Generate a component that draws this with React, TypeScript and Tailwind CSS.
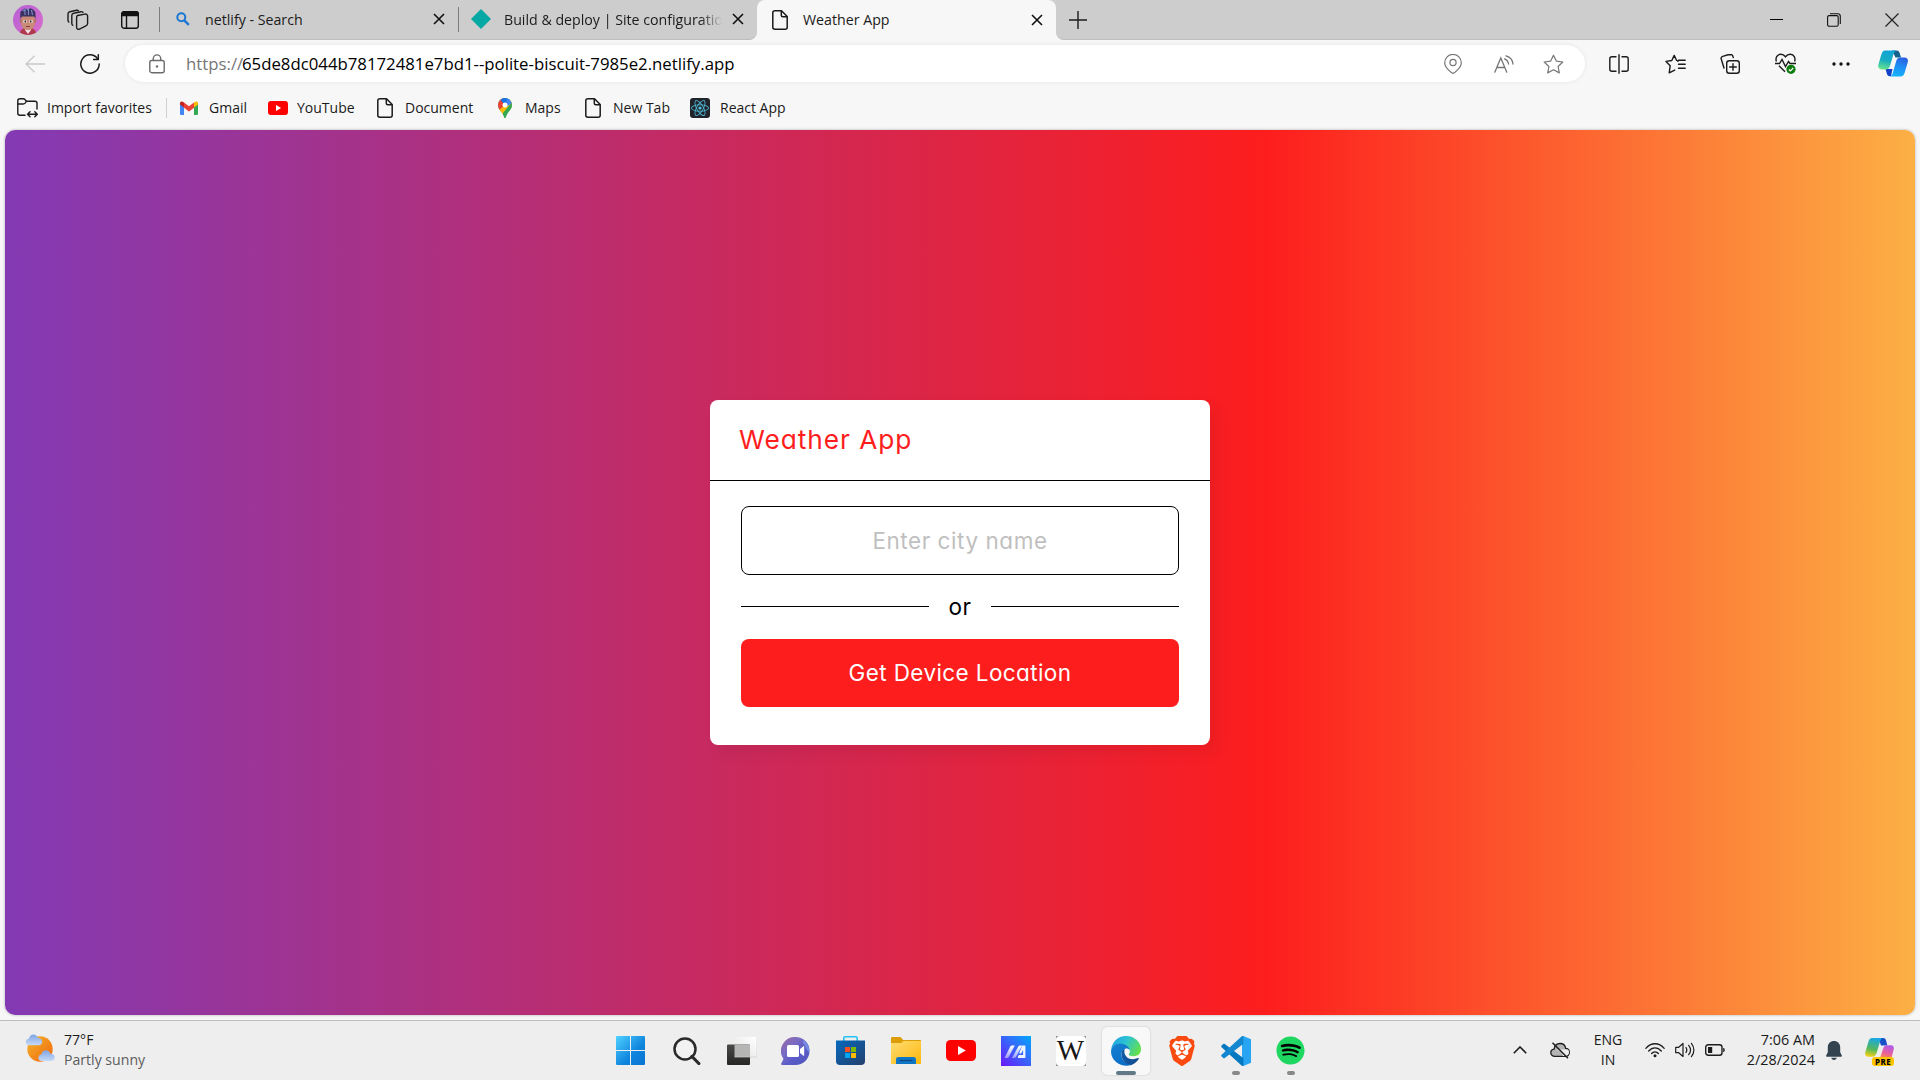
import React from "react";
import { FaReact, FaSpotify } from "react-icons/fa";
import { SiBrave } from "react-icons/si";

type IconProps = { className?: string };

/* ---------- title bar icons ---------- */

const Avatar = () => (
  <svg viewBox="0 0 30 30" className="size-[30px]">
    <defs>
      <clipPath id="av"><circle cx="15" cy="15" r="15" /></clipPath>
      <linearGradient id="avbg" x1="0" y1="0" x2="1" y2="1">
        <stop offset="0" stopColor="#b45fd6" />
        <stop offset="1" stopColor="#dc6ec8" />
      </linearGradient>
    </defs>
    <g clipPath="url(#av)">
      <rect width="30" height="30" fill="url(#avbg)" />
      <path d="M7 29c0-5 3-6 8-6s8 1 8 6v2H7z" fill="#b03a4c" />
      <path d="M12 22h6v3l-3 4-3-4z" fill="#f0dfe6" />
      <path d="M8.3 11h13.4v7.5c0 4-3.2 6.5-6.7 6.5s-6.700-2.500-6.700-6.500z" fill="#c98a78" />
      <ellipse cx="7.900" cy="16" rx="1.300" ry="2" fill="#b57466" />
      <ellipse cx="22.100" cy="16" rx="1.300" ry="2" fill="#b57466" />
      <path d="M7.300 14V7l2.200-2 2-1.500 3 .7 3-1 2.500 1.300 2.300 2.500.4 7-1.500-2.500H9z" fill="#3a3260" />
      <path d="M10 6l2-1.500V10M14 5l1.500-1V10M18.500 5l1 5" stroke="#7f8ed0" strokeWidth="1.100" fill="none" />
      <path d="M10.500 15h3v3h-3zM16.500 15h3v3h-3z" fill="#f2ecec" />
      <path d="M11.500 15.500h1.500v2h-1.500zM17 15.500h1.500v2H17z" fill="#33211f" />
      <path d="M13 21.500h4" stroke="#8a3f42" strokeWidth="1" />
    </g>
  </svg>
);

const Workspaces = () => (
  <svg viewBox="0 0 22 22" className="size-[22px]" fill="none" stroke="#1b1b1b" strokeWidth="1.400" strokeLinejoin="round">
    <path d="M10.500 6.500l7.500-1.400c1.300-.2 2.600.6 2.600 2v7.500c0 1.100-.7 1.900-1.700 2.200l-6.400 3.300c-1.300.6-2.900-.1-2.900-1.700V8.700c0-1.100.3-2 .9-2.200z" />
    <path d="M6.300 16.500c-.9-.2-1.500-1-1.500-2V6.400c0-1.200.7-2 1.800-2.200L14 2.700c1-.2 1.900.3 2.300 1.200" />
    <path d="M2.400 13.300C1.500 13 1 12.300 1 11.400V5c0-1.100.7-2 1.800-2.200L9.500 1.300c1-.2 1.700.1 2.200.8" />
  </svg>
);

const TabActions = () => (
  <svg viewBox="0 0 18 18" className="size-[18px]" fill="none" stroke="#111" strokeWidth="1.400">
    <rect x=".7" y=".7" width="16.600" height="16.600" rx="2.600" />
    <path d="M.7 4.500V3.200C.7 1.800 1.800.7 3.200.7h11.600c1.400 0 2.500 1.100 2.500 2.500v1.300z" fill="#111" />
    <path d="M5.500 5v12" />
  </svg>
);

const SearchTab = () => (
  <svg viewBox="0 0 14 14" className="size-[14px]" fill="none" stroke="#1a76d2" strokeWidth="2">
    <circle cx="5.300" cy="5.300" r="4" />
    <path d="M8.300 8.300l4.500 4.500" strokeWidth="2.400" />
  </svg>
);

const Page = ({ className = "" }: IconProps) => (
  <svg viewBox="0 0 16 20" className={`h-5 w-4 ${className}`} fill="none" stroke="#1b1b1b" strokeWidth="1.500" strokeLinejoin="round">
    <path d="M3 .8h6.500l5.700 5.700V17.200c0 1.200-.8 2-2 2H3c-1.300 0-2.200-.8-2.200-2V2.800C.8 1.600 1.700.8 3 .8z" />
    <path d="M9.300 1v4.200c0 1 .5 1.500 1.500 1.500h4.200" />
  </svg>
);

const TabClose = () => (
  <svg viewBox="0 0 12 12" className="size-3" stroke="#111" strokeWidth="1.600">
    <path d="M1 1l10 10M11 1L1 11" />
  </svg>
);

/* ---------- toolbar icons ---------- */

const Back = () => (
  <svg viewBox="0 0 20 18" className="h-[18px] w-5" fill="none" stroke="#c9c9c9" strokeWidth="1.300">
    <path d="M20 9H1M9.500.7L1 9l8.500 8.300" />
  </svg>
);

const Refresh = () => (
  <svg viewBox="0 0 20 20" className="size-5" fill="none" stroke="#1b1b1b" strokeWidth="1.500" strokeLinecap="round">
    <path d="M19.200 10A9.200 9.200 0 1 1 17.500 4.700" />
    <path d="M18.300.8v4.700h-4.700" strokeLinejoin="round" />
  </svg>
);

const Lock = () => (
  <svg viewBox="0 0 16 20" className="h-5 w-4" fill="none" stroke="#6b6b6b" strokeWidth="1.400">
    <rect x=".8" y="6.500" width="14.400" height="12.200" rx="2" />
    <path d="M4.300 6.500V4.600a3.700 3.700 0 0 1 7.400 0v1.900" />
    <circle cx="8" cy="12.500" r="1.200" fill="#6b6b6b" stroke="none" />
  </svg>
);

const Pin = () => (
  <svg viewBox="0 0 18 20" className="h-5 w-[18px]" fill="none" stroke="#767676" strokeWidth="1.200">
    <path d="M9 19.300c-1.200-.3-8.300-5.500-8.300-10.600a8.300 8.300 0 0 1 16.600 0C17.300 13.800 10.200 19 9 19.300z" />
    <circle cx="9" cy="8.500" r="3.100" />
  </svg>
);

const ReadAloud = () => (
  <svg viewBox="0 0 20 18" className="h-[18px] w-5" fill="none" stroke="#767676" strokeWidth="1.300" strokeLinecap="round">
    <path d="M.8 17.200L6.800 3l6 14.200M2.800 12.500h8" />
    <path d="M10.500 3.800c2.300.8 3.700 2.600 4 5.200" />
    <path d="M12 .8c4.200 1.200 6.700 4.200 7 8.200" />
  </svg>
);

const Star = () => (
  <svg viewBox="0 0 21 20" className="h-5 w-[21px]" fill="none" stroke="#767676" strokeWidth="1.200" strokeLinejoin="round">
    <path d="M10.500 1.200l2.800 5.900 6.500.9-4.700 4.500 1.200 6.400-5.800-3.100-5.800 3.100 1.200-6.400L1.200 8l6.500-.9z" />
  </svg>
);

const Split = () => (
  <svg viewBox="0 0 20 20" className="size-5" fill="none" stroke="#1b1b1b" strokeWidth="1.400">
    <path d="M7.500 2.700H3C1.700 2.700.8 3.500.8 4.700v10.600c0 1.200.9 2 2.200 2h4.500M12.500 2.700H17c1.300 0 2.200.8 2.200 2v10.600c0 1.200-.9 2-2.200 2h-4.500M10 .3v19.400" />
  </svg>
);

const Favorites = () => (
  <svg viewBox="0 0 21 20" className="h-5 w-[21px]" fill="none" stroke="#1b1b1b" strokeWidth="1.400" strokeLinejoin="round" strokeLinecap="round">
    <path d="M11.500 6.200L9.200 1.400 6.800 6.500 1 7.400l4.200 4.300-1 7.200 5.500-2.800M13 7.300l-1.500-1.100M13.500 6.200h6.700M13.500 10.200h6.700M13.500 14.200h6.700" />
  </svg>
);

const Collections = () => (
  <svg viewBox="0 0 20 20" className="size-5" fill="none" stroke="#1b1b1b" strokeWidth="1.400" strokeLinecap="round">
    <rect x="6.700" y="6.700" width="12.600" height="12.600" rx="2.500" />
    <path d="M13 9.700v6.600M9.700 13h6.600" />
    <path d="M4 14L1.300 5.300c-.5-1.500.2-2.600 1.400-3l5.300-1.500 3-.2c1 0 1.700.7 2 1.900l.3 1" />
  </svg>
);

const Essentials = () => (
  <svg viewBox="0 0 21 21" className="size-[21px]" fill="none" stroke="#1b1b1b" strokeWidth="1.400">
    <path d="M1.400 8.500C.2 5 2 1.500 5.700 1.300c2-.1 3.500.9 4.800 2.500 1.300-1.600 2.800-2.600 4.800-2.500C19 1.500 20.800 5 19.600 8.500M4 12.700l6 6" />
    <path d="M0 10.500h4.500L7 6.500l3.500 7 3-5 1.500 2H21" />
    <circle cx="16" cy="16.300" r="4.600" fill="#107c10" stroke="none" />
    <path d="M13.900 16.500l1.500 1.400 2.800-2.900" stroke="#fff" strokeWidth="1.200" />
  </svg>
);

const Copilot = () => (
  <svg viewBox="0 0 30 27" className="h-[27px] w-[30px]">
    <defs>
      <linearGradient id="cpl" x1=".4" y1="0" x2=".2" y2="1">
        <stop offset="0" stopColor="#0fa4d8" /><stop offset=".5" stopColor="#18adc0" /><stop offset="1" stopColor="#6be58a" />
      </linearGradient>
      <linearGradient id="cpr" x1=".7" y1="0" x2=".4" y2="1">
        <stop offset="0" stopColor="#2a5fe0" /><stop offset=".5" stopColor="#1e90f5" /><stop offset="1" stopColor="#16b4fb" />
      </linearGradient>
    </defs>
    <path d="M14 .5h4.500c2 0 2.800 1.300 3.300 3l1.200 4h-5.500z" fill="#13628c" />
    <path d="M7.500 19h7l-1.500 7.300h-1c-2 0-2.800-1.300-3.200-2.800z" fill="#1440c8" />
    <path d="M7 .5h11.500c-1.300 0-2.200 1-2.800 3l-3.600 12c-.8 2.500-2 3.900-4.600 3.900H3.500C.7 19.400-.4 17 .4 14.500l3-10.200C4.200 1.800 5.200.5 7 .5z" fill="url(#cpl)" />
    <path d="M22.500 26.500H11.800c1.500 0 2.300-1.200 2.900-3.200l3.400-11.800c.7-2.600 2-3.900 4.400-3.900h4c3 0 4 2.200 3.200 4.800l-3 10.200c-.8 2.500-1.800 3.900-4.200 3.900z" fill="url(#cpr)" />
  </svg>
);

/* ---------- bookmark icons ---------- */

const ImportFolder = () => (
  <svg viewBox="0 0 21 20" className="h-5 w-[21px]" fill="none" stroke="#1b1b1b" strokeWidth="1.400" strokeLinecap="round" strokeLinejoin="round">
    <path d="M8 17.200H3c-1.300 0-2.200-.8-2.200-2V2.800C.8 1.600 1.700.8 3 .8h3.200c.8 0 1.400.3 1.900.9l1.400 1.500h8.300c1.300 0 2.200.8 2.200 2V11" />
    <path d="M.9 6h5.300c.8 0 1.400-.3 1.900-.9l1.300-1.700M10.500 16.200h9.700M13 13.700l-2.500 2.500 2.500 2.500M17.800 13.700l2.500 2.500-2.500 2.500" />
  </svg>
);

const Gmail = () => (
  <svg viewBox="0 0 18 14" className="h-[14px] w-[18px]">
    <path d="M0 3h4v11H1.300C.6 14 0 13.400 0 12.700z" fill="#4285f4" />
    <path d="M14 3h4v9.700c0 .7-.6 1.300-1.300 1.300H14z" fill="#34a853" />
    <path d="M0 2v1.500L4 6.600V1.500L3.200.9C1.900-.1 0 .4 0 2z" fill="#c5221f" />
    <path d="M18 2v1.500l-4 3.100V1.500l.8-.6C16.100-.1 18 .4 18 2z" fill="#fbbc04" />
    <path d="M4 1.500l5 3.800 5-3.800v5.200l-5 3.700-5-3.700z" fill="#ea4335" />
  </svg>
);

const YouTube = ({ className = "" }: IconProps) => (
  <svg viewBox="0 0 20 14" className={className}>
    <rect width="20" height="14" rx="3" fill="#f00" />
    <path d="M8 4l5.200 3L8 10z" fill="#fff" />
  </svg>
);

const MapsPin = () => (
  <svg viewBox="0 0 14 20" className="h-5 w-[14px]">
    <defs>
      <clipPath id="mp"><path d="M7 0a7 7 0 0 1 7 7c0 4.500-4 6-6 11.500-.3 1-.6 1.500-1 1.500s-.7-.5-1-1.500C4 13 0 11.500 0 7a7 7 0 0 1 7-7z" /></clipPath>
    </defs>
    <g clipPath="url(#mp)">
      <rect width="14" height="20" fill="#34a853" />
      <path d="M0 12L14 0v9L3 17z" fill="#fbbc04" />
      <path d="M14 4v16H4l1-5z" fill="#34a853" />
      <path d="M0 0h5l2 7-7 6z" fill="#ea4335" />
      <path d="M2.500 2L7 7l6-5L9 0H4z" fill="#1a73e8" />
      <path d="M9 0l5 4v1L8 9z" fill="#4285f4" />
    </g>
    <circle cx="7" cy="7" r="2.500" fill="#fff" />
  </svg>
);

/* ---------- taskbar icons ---------- */

const Weather = () => (
  <svg viewBox="0 0 30 28" className="h-7 w-[30px]">
    <defs>
      <linearGradient id="sun" x1="0" y1="0" x2="1" y2="1"><stop offset="0" stopColor="#f0b72e" /><stop offset="1" stopColor="#f4640c" /></linearGradient>
      <linearGradient id="cl" x1="0" y1="0" x2="0" y2="1"><stop offset="0" stopColor="#7fa3e4" /><stop offset="1" stopColor="#c7dbf8" /></linearGradient>
    </defs>
    <circle cx="15" cy="15" r="12.700" fill="url(#sun)" />
    <path d="M3.500 11.300a3.300 3.300 0 0 1 .3-6.500C4.500 2 6.200.5 8.500.5c2.100 0 3.800 1.300 4.300 3.200 2.600.2 4.400 1.700 4.400 3.900s-1.500 3.700-3.700 3.700z" fill="url(#cl)" />
    <path transform="translate(12.500 15.700)" d="M3.500 11.300a3.300 3.300 0 0 1 .3-6.500C4.500 2 6.200.5 8.500.5c2.100 0 3.800 1.300 4.300 3.200 2.600.2 4.400 1.700 4.400 3.900s-1.500 3.700-3.700 3.700z" fill="url(#cl)" />
  </svg>
);

const Windows = () => (
  <svg viewBox="0 0 29 29" className="size-[29px]">
    <defs>
      <linearGradient id="wn" gradientUnits="userSpaceOnUse" x1="0" y1="0" x2="29" y2="29"><stop offset="0" stopColor="#4fd2ff" /><stop offset=".6" stopColor="#0f85dd" /><stop offset="1" stopColor="#0873d2" /></linearGradient>
    </defs>
    <path d="M1 0h13v14H0V1a1 1 0 0 1 1-1zM15 0h13a1 1 0 0 1 1 1v13H15zM0 15h14v14H1a1 1 0 0 1-1-1zM15 15h14v13a1 1 0 0 1-1 1H15z" fill="url(#wn)" />
  </svg>
);

const TaskSearch = () => (
  <svg viewBox="0 0 28 28" className="ml-0.5 size-7" fill="none">
    <circle cx="12" cy="12" r="10.500" stroke="#2a2a2a" strokeWidth="2.500" fill="#f2f2f2" />
    <path d="M19 19.500l6.800 7" stroke="#2a2a2a" strokeWidth="3.200" strokeLinecap="round" />
  </svg>
);

const TaskView = () => (
  <svg viewBox="0 0 30 28" className="ml-0.5 h-7 w-[30px]">
    <defs>
      <linearGradient id="tv" x1="0" y1="0" x2="0" y2="1"><stop offset="0" stopColor="#4a4a48" /><stop offset="1" stopColor="#262624" /></linearGradient>
      <linearGradient id="tw" x1="0" y1="1" x2="1" y2="0"><stop offset="0" stopColor="#e2e2e2" /><stop offset="1" stopColor="#fff" /></linearGradient>
    </defs>
    <rect x="7.500" width="22.500" height="20" rx="1" fill="url(#tw)" />
    <rect y="7.500" width="23" height="20.500" rx="1" fill="url(#tv)" />
    <path d="M7.500 7.500H23V20H7.500z" fill="#b5b5b3" />
    <path d="M7.500 20H30V.5" stroke="#cfcfcf" strokeWidth=".7" fill="none" />
  </svg>
);

const Chat = () => (
  <svg viewBox="0 0 29 28" className="h-7 w-[29px]">
    <defs>
      <linearGradient id="ch" x1="0" y1="0" x2="1" y2="1"><stop offset="0" stopColor="#98659f" /><stop offset=".35" stopColor="#7a6cc4" /><stop offset=".6" stopColor="#5b5bc9" /><stop offset="1" stopColor="#5058b8" /></linearGradient>
    </defs>
    <path d="M14.500 0A14 14 0 1 1 14.500 28H1.500C0 28-.2 27 .5 26L2.500 22A14 14 0 0 1 14.500 0z" fill="url(#ch)" />
    <path d="M22 3a14 14 0 0 1 6.500 10c.2 3-2 2-3.500-2s-4-5-3-8z" fill="#7ea0ee" opacity=".7" />
    <rect x="6" y="8" width="12" height="12" rx="1.500" fill="#fff" />
    <path d="M19 12l3.500-2.800c.5-.2.700 0 .7.500v8.600c0 .5-.2.700-.7.500L19 16z" fill="#fff" />
  </svg>
);

const Store = () => (
  <svg viewBox="0 0 29 29" className="size-[29px]">
    <defs>
      <linearGradient id="st" x1="0" y1="0" x2="1" y2="1"><stop offset="0" stopColor="#0669bd" /><stop offset="1" stopColor="#24406c" /></linearGradient>
    </defs>
    <path d="M7.800 6V2.200c0-.9.500-1.400 1.400-1.400h10.600c.9 0 1.400.5 1.400 1.400V6" fill="none" stroke="#22c3f3" strokeWidth="1.600" />
    <path d="M0 4.500h29V25a4 4 0 0 1-4 4H4a4 4 0 0 1-4-4z" fill="url(#st)" />
    <path d="M9 11h5v5H9z" fill="#f25022" /><path d="M15 11h5v5h-5z" fill="#7fba00" />
    <path d="M9 17h5v5H9z" fill="#00a4ef" /><path d="M15 17h5v5h-5z" fill="#ffb900" />
  </svg>
);

const Folder = () => (
  <svg viewBox="0 0 30 27" className="h-[27px] w-[30px]">
    <defs>
      <linearGradient id="fo" x1="0" y1="0" x2="1" y2="1"><stop offset="0" stopColor="#ffdc73" /><stop offset="1" stopColor="#fdb80b" /></linearGradient>
    </defs>
    <path d="M0 1.500C0 .5.500 0 1.500 0h7c1 0 1.500.3 2.200 1.200L12 3h17c.7 0 1 .5 1 1v5H0z" fill="#dc9d08" />
    <path d="M0 6h9c1.200 0 1.800-.3 2.500-1L12.500 4H30v23H0z" fill="url(#fo)" />
    <path d="M5 27v-4.500c0-1.700 1-2.500 2.500-2.500h15c1.600 0 2.500.9 2.500 2.500V27z" fill="#0f75c5" />
    <path d="M8.500 23.500h13" stroke="#0a4a80" strokeWidth="1.200" />
  </svg>
);

const MyAsus = () => (
  <svg viewBox="0 0 30 30" className="size-[30px]">
    <defs>
      <linearGradient id="as" x1="0" y1="1" x2="1" y2="0"><stop offset="0" stopColor="#6a15f8" /><stop offset=".5" stopColor="#3a62fb" /><stop offset="1" stopColor="#02a8fd" /></linearGradient>
      <linearGradient id="aw" x1="0" y1="1" x2="0" y2="0"><stop offset="0" stopColor="#fff" stopOpacity=".45" /><stop offset="1" stopColor="#fff" /></linearGradient>
    </defs>
    <rect width="30" height="30" fill="url(#as)" />
    <path d="M3.500 22L9 11c.6-1 1.200-1.400 2.500-1.400h2.300L8 20.500c-.7 1.200-1.300 1.500-2.500 1.500zM11 22l6-11c.6-1 1.300-1.400 2.600-1.400h1.600l-6 11c-.6 1.100-1.200 1.400-2.500 1.400z" fill="url(#aw)" />
    <path d="M21.200 9.600h3.200V22h-6.700c-.9 0-1.200-.5-.7-1.500l.8-1.500h4.300v-5l-2 3.600h-2z" fill="#f1f4ff" />
  </svg>
);

const Wikipedia = () => (
  <div className="grid size-[30px] place-items-center overflow-hidden bg-[#8a8a8a]">
    <div className="grid size-[30px] place-items-center rounded-[4px] bg-white font-['Liberation_Serif',serif] text-[29px] leading-none text-[#181818]">
      W
    </div>
  </div>
);

const Edge = () => (
  <svg viewBox="0 0 30 30" className="size-[30px]">
    <defs>
      <linearGradient id="e1" x1="0" y1=".2" x2="1" y2=".6"><stop offset="0" stopColor="#1f9fe0" /><stop offset=".45" stopColor="#2cc3d4" /><stop offset="1" stopColor="#66e04a" /></linearGradient>
      <linearGradient id="e2" x1="0" y1="0" x2=".5" y2="1"><stop offset="0" stopColor="#1583d2" /><stop offset="1" stopColor="#0b6ec6" /></linearGradient>
      <linearGradient id="e3" x1="0" y1="0" x2="1" y2="0"><stop offset="0" stopColor="#125ba8" /><stop offset="1" stopColor="#114a8b" /></linearGradient>
    </defs>
    <path d="M.2 14C.8 6 7 0 15 0c9 0 15 6.500 15 13 0 4.800-3.500 7.200-7.300 7.200-3 0-5-.8-5-1.700 0-.8 1.200-1.300 1.200-3.300 0-4-5-7.200-9.900-7.200-4.400 0-7.500 2.500-8.800 6z" fill="url(#e1)" />
    <path d="M0 15.500C.3 10.500 4.500 7.500 9 7.500c5 0 9.500 3.300 9.900 6.500C16 11 11.500 12.500 10.500 17c-1 5.500 3.500 11.500 10 12C11 32 0 25.500 0 15.500z" fill="url(#e2)" />
    <path d="M14 12.200c-1.900 1-3.300 2.700-3.500 4.800C9.900 23.500 14.500 29.500 20.500 29c3.500-1.500 6-4 7.300-6.300.3-.7-.2-1-.9-.6-4 2-9.600 1.500-12-2-1.700-2.500-2-5.500-.9-7.900z" fill="url(#e3)" />
  </svg>
);

const Brave = () => (
  <div className="relative grid h-[30px] w-7 place-items-center">
    <div className="absolute h-[22px] w-[15px] rounded-b-lg bg-white" />
    <SiBrave className="relative size-[30px] text-[#fb4a10]" />
  </div>
);

const VSCode = () => (
  <svg viewBox="0 0 30 30" className="size-[30px]">
    <path d="M22.300 0L30 3.200v23.600L22.300 30 21 28V2z" fill="#27a5f2" />
    <path d="M22.300 30c-.6.200-1.300 0-1.800-.5L.6 11.300c-.6-.5-.6-1.300 0-1.800L2.200 8c.5-.4 1.100-.4 1.600 0L22.500 22.300z" fill="#0678c0" />
    <path d="M22.300 0c-.6-.2-1.300 0-1.800.5L.6 18.700c-.6.500-.6 1.300 0 1.800L2.200 22c.5.400 1.100.4 1.600 0L22.500 7.700z" fill="#1287cf" />
  </svg>
);

const Spotify = () => (
  <div className="relative grid size-[29px] place-items-center">
    <div className="absolute size-[25px] rounded-full bg-black" />
    <FaSpotify className="relative size-[29px] text-[#1ed760]" />
  </div>
);

/* ---------- system tray icons ---------- */

const CloudOff = () => (
  <svg viewBox="0 0 20 17" className="h-[17px] w-5" fill="none" stroke="#1d1d1d" strokeWidth="1.300">
    <path d="M4.800 14.300C2.500 14.300.8 12.800.8 10.700c0-2 1.400-3.400 3.300-3.600C4.600 3.700 6.900 1.500 10 1.500s5.200 2 5.700 4.800c2.200.1 3.600 1.700 3.600 3.900 0 2.400-1.700 4.100-4 4.100z" fill="#b4b4b4" />
    <path d="M4 7.500c4-.5 7 2 9 6.500h3c3-1 4-4 2-6.500" stroke="none" fill="#ececec" />
    <path d="M2.500.8l15.500 15.500" strokeWidth="1.500" />
  </svg>
);

const Wifi = () => (
  <svg viewBox="0 0 20 16" className="h-4 w-5" fill="none" stroke="#1d1d1d" strokeWidth="1.300" strokeLinecap="round">
    <path d="M.8 6.300c5.200-6.100 13.200-6.100 18.400 0M3.700 9c3.700-4.200 8.900-4.200 12.600 0M6.600 11.500c2-2.300 4.800-2.300 6.800 0" />
    <circle cx="10" cy="13.800" r="1.500" fill="#1d1d1d" stroke="none" />
  </svg>
);

const Speaker = () => (
  <svg viewBox="0 0 20 16" className="h-4 w-5" fill="none" stroke="#1d1d1d" strokeWidth="1.200" strokeLinecap="round" strokeLinejoin="round">
    <path d="M.7 5.300h3L8 1.500v13l-4.300-3.800h-3z" />
    <path d="M11 5.500c1 1.500 1 3.500 0 5M13.700 3.300c2.200 2.800 2.200 6.600 0 9.400M16.400 1.300c3.300 4 3.300 9.400 0 13.400" />
  </svg>
);

const Battery = () => (
  <svg viewBox="0 0 20 12" className="h-3 w-5" fill="none" stroke="#1d1d1d" strokeWidth="1.400">
    <rect x=".7" y=".7" width="16.300" height="10.600" rx="2.500" />
    <path d="M3 3h4.200v6H3z" fill="#1d1d1d" stroke="none" />
    <path d="M18.200 4v4c1 0 1.500-.6 1.500-2s-.5-2-1.500-2z" fill="#1d1d1d" stroke="none" />
  </svg>
);

const Bell = () => (
  <svg viewBox="0 0 16 19" className="h-[19px] w-4" fill="#33434f">
    <path d="M8 0c3.600 0 6.200 2.700 6.200 6.200v5l1.600 3.200c.4.800 0 1.400-.8 1.400H1c-.8 0-1.200-.6-.8-1.400l1.600-3.200v-5C1.800 2.700 4.400 0 8 0zM5.200 16.800h5.600C10.500 18 9.500 19 8 19s-2.500-1-2.800-2.200z" />
  </svg>
);

const CopilotPre = () => (
  <div className="relative h-7 w-[30px]">
    <svg viewBox="0 0 29 20" className="h-5 w-[29px]">
      <defs>
        <linearGradient id="q1" x1=".5" y1="0" x2=".3" y2="1"><stop offset="0" stopColor="#1aa7e6" /><stop offset=".6" stopColor="#54b95c" /><stop offset="1" stopColor="#f5d013" /></linearGradient>
        <linearGradient id="q2" x1=".6" y1="0" x2=".3" y2="1"><stop offset="0" stopColor="#b25bea" /><stop offset=".6" stopColor="#e8609c" /><stop offset="1" stopColor="#fb8a52" /></linearGradient>
      </defs>
      <path d="M13.500 0h4.500c2 0 2.700 1.300 3.200 3l1.100 4.500H16z" fill="#164fc8" />
      <path d="M7 0h11c-1.300 0-2.200 1-2.800 3l-3.600 12c-.8 2.400-2 3.700-4.600 3.700H3.300c-2.600 0-3.700-2.200-2.900-4.700l3-10.200C4.100 1.300 5.200 0 7 0z" fill="url(#q1)" />
      <path d="M15 20l3-9c.7-2.500 1.800-3.700 4-3.700h4c2.500 0 3.300 1.900 2.600 4.500L26.500 20z" fill="url(#q2)" />
    </svg>
    <div className="absolute bottom-0 left-[7px] grid h-[9px] w-[22px] place-items-center rounded-[3px] bg-[#ffc400] font-['Noto_Sans',sans-serif] text-[8px] font-extrabold leading-none tracking-[0.4px] text-black">
      PRE
    </div>
  </div>
);

/* ---------- sections ---------- */

function TabStrip() {
  return (
    <div className="flex h-10 bg-[#f7f7f7] text-[14.200px] text-[#1b1b1b]">
      <div className="flex w-[757px] items-center rounded-br-lg border-b border-[#bdbdbd] bg-[#cdcdcd] pl-[13px]">
        <Avatar />
        <div className="ml-6"><Workspaces /></div>
        <div className="ml-8"><TabActions /></div>
        <div className="ml-5 h-[25px] w-px bg-[#7c7c7c]" />
        <div className="flex w-[298px] items-center pl-4">
          <SearchTab />
          <span className="ml-[15px] flex-1">netlify - Search</span>
          <div className="mr-[13px]"><TabClose /></div>
        </div>
        <div className="h-[25px] w-px bg-[#7c7c7c]" />
        <div className="flex w-[298px] items-center pl-3">
          <svg viewBox="0 0 20 20" className="size-5"><path d="M10 0l10 10-10 10L0 10z" fill="#05a8a2" /></svg>
          <span className="ml-[13px] w-[218px] whitespace-nowrap [mask-image:linear-gradient(to_right,#000_90%,transparent)]">
            Build &amp; deploy | Site configuratio
          </span>
          <div className="ml-[10px]"><TabClose /></div>
        </div>
      </div>
      <div className="flex flex-1 bg-[#cdcdcd]">
        <div className="flex w-[299px] items-center rounded-t-lg bg-[#f7f7f7] pl-[15px]">
          <Page />
          <span className="ml-[15px] flex-1">Weather App</span>
          <div className="mr-[13px]"><TabClose /></div>
        </div>
        <div className="flex-1 bg-[#f7f7f7]">
          <div className="flex h-full items-center rounded-bl-lg border-b border-[#bdbdbd] bg-[#cdcdcd] pl-[13px]">
            <svg viewBox="0 0 18 18" className="size-[18px]" stroke="#1b1b1b" strokeWidth="1.400"><path d="M9 0v18M0 9h18" /></svg>
            <div className="ml-auto flex items-center gap-[44px] pr-[21px]">
              <svg viewBox="0 0 13 13" className="size-[13px]"><path d="M0 6.500h13" stroke="#000" /></svg>
              <svg viewBox="0 0 14 14" className="size-[14px]" fill="none" stroke="#111" strokeWidth="1.100">
                <rect x=".6" y="2.600" width="10.600" height="10.600" rx="1.500" />
                <path d="M3 .7h7.800c1.500 0 2.500 1 2.500 2.500V11" />
              </svg>
              <svg viewBox="0 0 14 14" className="size-[14px]" stroke="#222" strokeWidth="1.200"><path d="M.5.5l13 13M13.500.5l-13 13" /></svg>
            </div>
          </div>
        </div>
      </div>
    </div>
  );
}

function Toolbar() {
  return (
    <div className="flex h-[47px] items-center pl-[25px]">
      <Back />
      <div className="ml-[35px]"><Refresh /></div>
      <div className="ml-[25px] flex h-[37px] w-[1460px] items-center rounded-full bg-white pl-[24px] pr-[21px] shadow-[0_0_4px_rgba(0,0,0,0.08)]">
        <Lock />
        <div className="ml-[21px] flex flex-1 text-[16.780px]">
          <span className="w-[56px] text-[#767676]">https://</span>
          <span className="text-black">65de8dc044b78172481e7bd1--polite-biscuit-7985e2.netlify.app</span>
        </div>
        <Pin />
        <div className="ml-8"><ReadAloud /></div>
        <div className="ml-[29px]"><Star /></div>
      </div>
      <div className="ml-6 flex items-center">
        <div className="w-14"><Split /></div>
        <div className="w-[55px]"><Favorites /></div>
        <div className="w-[55px]"><Collections /></div>
        <div className="w-[57px]"><Essentials /></div>
        <svg viewBox="0 0 18 4" className="h-1 w-[18px]" fill="#111"><circle cx="2" cy="2" r="1.700" /><circle cx="9" cy="2" r="1.700" /><circle cx="16" cy="2" r="1.700" /></svg>
        <div className="ml-7"><Copilot /></div>
      </div>
    </div>
  );
}

function Bookmarks() {
  return (
    <div className="flex h-[43px] items-center pb-0.5 pl-[17px] text-[14px] text-[#1b1b1b]">
      <div className="flex w-[149px] items-center gap-[9px]"><ImportFolder />Import favorites</div>
      <div className="h-5 w-px bg-[#cfcfcf]" />
      <div className="ml-[13px] flex w-[88px] items-center gap-[11px]"><Gmail />Gmail</div>
      <div className="flex w-[109px] items-center gap-[9px]"><YouTube className="h-[14px] w-5" />YouTube</div>
      <div className="flex w-[121px] items-center gap-3"><Page />Document</div>
      <div className="flex w-[87px] items-center gap-[13px]"><MapsPin />Maps</div>
      <div className="flex w-[105px] items-center gap-3"><Page />New Tab</div>
      <div className="flex items-center gap-[10px]">
        <div className="grid size-5 place-items-center rounded-[3px] bg-[#20232a]"><FaReact className="size-[18px] text-[#53c1de]" /></div>
        React App
      </div>
    </div>
  );
}

function WeatherCard() {
  return (
    <div className="h-[345px] w-[500px] rounded-lg bg-white font-['Inter',sans-serif] shadow-[8px_8px_16px_rgba(0,0,0,0.06)] [font-feature-settings:'cv11']">
      <header className="flex h-[81px] items-center border-b border-black pl-[29px] text-[26.250px] tracking-[0.95px] text-[#fd1d1d]">
        Weather App
      </header>
      <div className="px-[31px] pt-[25px] text-[22.500px]">
        <input
          type="text"
          placeholder="Enter city name"
          className="h-[69px] w-full rounded-lg border border-black text-center tracking-[0.56px] outline-none placeholder:text-[#bfbfbf]"
        />
        <div className="flex h-16 items-center gap-[18px]">
          <div className="mb-0.5 h-px flex-1 bg-black" />
          <span className="w-[26px] text-center tracking-[0.6px]">or</span>
          <div className="mb-0.5 h-px flex-1 bg-black" />
        </div>
        <button className="block h-[68px] w-full rounded-lg bg-[#fd1d1d] tracking-[0.4px] text-white">
          Get Device Location
        </button>
      </div>
    </div>
  );
}

const apps: { name: string; icon: React.ReactNode; state?: "active" | "running" }[] = [
  { name: "start", icon: <Windows /> },
  { name: "search", icon: <TaskSearch /> },
  { name: "taskview", icon: <TaskView /> },
  { name: "chat", icon: <Chat /> },
  { name: "store", icon: <Store /> },
  { name: "explorer", icon: <Folder /> },
  { name: "youtube", icon: <YouTube className="h-[21px] w-[30px]" /> },
  { name: "myasus", icon: <MyAsus /> },
  { name: "wikipedia", icon: <Wikipedia /> },
  { name: "edge", icon: <Edge />, state: "active" },
  { name: "brave", icon: <Brave /> },
  { name: "vscode", icon: <VSCode />, state: "running" },
  { name: "spotify", icon: <Spotify />, state: "running" },
];

function Taskbar() {
  return (
    <div className="flex h-[60px] items-center border-t border-[#bdbdbd] bg-[#eeeeee] text-[14.100px] leading-5 text-[#1b1b1b]">
      <div className="flex w-[603px] items-center gap-[9px] pb-0.5 pl-[25px]">
        <div className="mb-1"><Weather /></div>
        <div>
          <div>77°F</div>
          <div className="text-[#5c5c5c]">Partly sunny</div>
        </div>
      </div>
      <div className="flex">
        {apps.map((a) => (
          <div key={a.name} className="flex w-[55px] justify-center">
            <div
              className={
                a.state === "active"
                  ? "relative grid size-12 place-items-center rounded-[5px] bg-[#f8f8f8] shadow-[0_0_2px_rgba(0,0,0,0.2)]"
                  : "relative grid size-12 place-items-center"
              }
            >
              {a.icon}
              {a.state === "active" && <div className="absolute bottom-0 h-1 w-5 rounded-full bg-[#627a88]" />}
              {a.state === "running" && <div className="absolute bottom-0 h-1 w-2 rounded-full bg-[#888]" />}
            </div>
          </div>
        ))}
      </div>
      <div className="ml-auto flex items-center pb-px pr-[25px]">
        <svg viewBox="0 0 14 8" className="h-2 w-[14px]" fill="none" stroke="#1d1d1d" strokeWidth="1.600"><path d="M.8 7.200L7 1l6.200 6.200" /></svg>
        <div className="ml-[23px]"><CloudOff /></div>
        <div className="ml-[23px] w-[30px] text-center"><div>ENG</div><div>IN</div></div>
        <div className="ml-[22px]"><Wifi /></div>
        <div className="ml-[10px]"><Speaker /></div>
        <div className="ml-[10px]"><Battery /></div>
        <div className="ml-[10px] w-20 whitespace-nowrap text-right text-[14.400px]"><div>7:06 AM</div><div>2/28/2024</div></div>
        <div className="ml-[11px]"><Bell /></div>
        <div className="ml-[23px] mt-1"><CopilotPre /></div>
      </div>
    </div>
  );
}

export default function App() {
  return (
    <div className="flex h-[1080px] w-[1920px] flex-col overflow-hidden bg-[#f7f7f7] font-['Open_Sans','Noto_Sans',sans-serif]">
      <TabStrip />
      <Toolbar />
      <Bookmarks />
      <main className="mx-[5px] mb-[5px] grid flex-1 place-items-center rounded-[10px] bg-[linear-gradient(90deg,#833ab4_0%,#fd1d1d_66%,#fcb045_100%)] shadow-[0_0_3px_rgba(0,0,0,0.3)]">
        <WeatherCard />
      </main>
      <Taskbar />
    </div>
  );
}
